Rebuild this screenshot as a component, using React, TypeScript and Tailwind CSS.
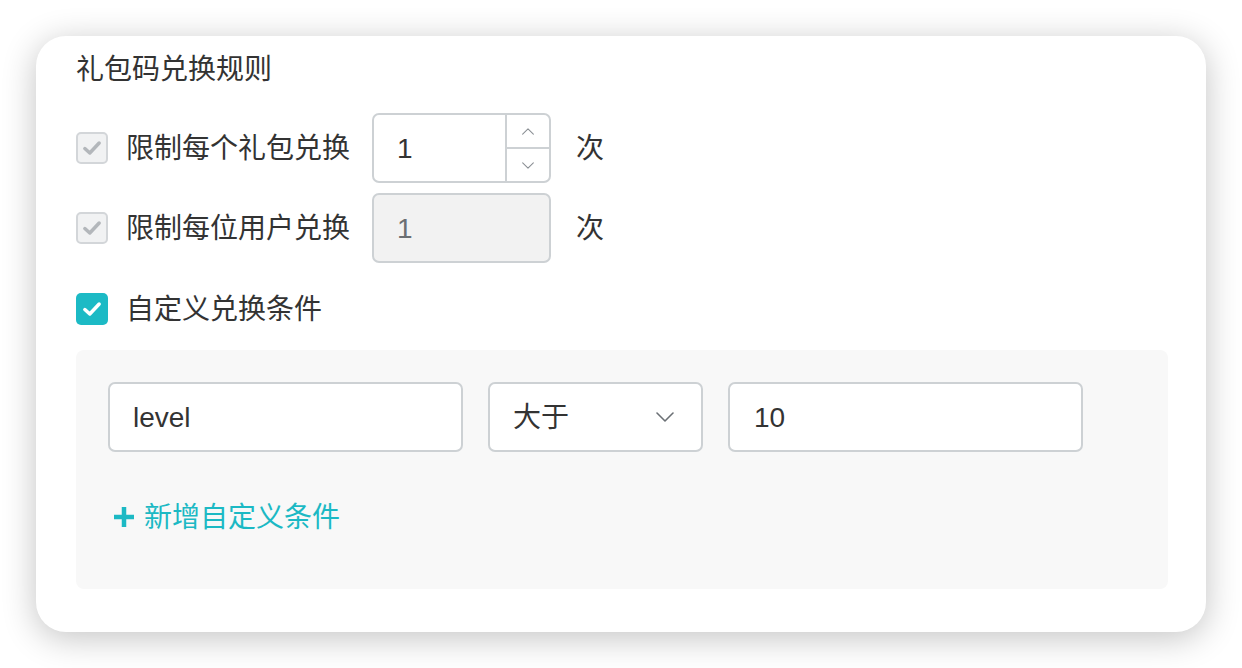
import type { ReactNode } from 'react';

const font = { fontFamily: '"Liberation Sans", "Noto Sans CJK SC", sans-serif' };

function CheckIcon({ className }: { className: string }) {
    return (
        <svg viewBox="0 0 20 20" className={className} fill="none">
            <path d="M3.5 10.5 L8 14.5 L16.5 5.5" stroke="currentColor" strokeWidth="3.2" strokeLinecap="round" strokeLinejoin="round" />
        </svg>
    );
}

function Checkbox({ checked, disabled }: { checked?: boolean; disabled?: boolean }) {
    if (disabled) {
        return (
            <div className="w-[32px] h-[32px] rounded-[5px] border-2 border-[#d3d6d9] bg-[#f1f2f3] flex items-center justify-center shrink-0">
                <CheckIcon className="w-[22px] h-[22px] text-[#b3b7bb]" />
            </div>
        );
    }
    return (
        <div className={`w-[32px] h-[32px] rounded-[5px] flex items-center justify-center shrink-0 ${checked ? 'bg-[#1cbac5]' : 'border-2 border-[#d3d6d9] bg-white'}`}>
            {checked && <CheckIcon className="w-[22px] h-[22px] text-white" />}
        </div>
    );
}

function Chevron({ up, className }: { up?: boolean; className: string }) {
    return (
        <svg viewBox="0 0 18 10" className={className} fill="none">
            <path d={up ? 'M1 9 L9 1 L17 9' : 'M1 1 L9 9 L17 1'} stroke="currentColor" strokeWidth="1.6" strokeLinecap="round" strokeLinejoin="round" />
        </svg>
    );
}

function LimitRow({ label, children }: { label: string; children: ReactNode }) {
    return (
        <div className="flex items-center h-[70px]">
            <Checkbox disabled />
            <span className="ml-[18px] w-[246px] shrink-0 text-[28px] leading-[40px] pt-[2px] text-[#333]">{label}</span>
            {children}
            <span className="ml-[25px] text-[28px] leading-[40px] pt-[2px] text-[#333]">次</span>
        </div>
    );
}

export default function App() {
    return (
        <div className="min-h-screen bg-white flex items-start justify-start pt-[36px] pl-[36px]" style={font}>
            <div className="w-[1170px] h-[596px] bg-white rounded-[30px] shadow-[0_6px_34px_rgba(0,0,0,0.24)] pl-[40px] pr-[38px] pt-[14px]">
                <h2 className="text-[28px] leading-[40px] text-[#333] font-normal">礼包码兑换规则</h2>

                <div className="mt-[23px] flex flex-col gap-[10px]">
                    <LimitRow label="限制每个礼包兑换">
                        <div className="w-[179px] h-[70px] rounded-[7px] border-2 border-[#cdd1d4] bg-white flex overflow-hidden">
                            <div className="flex-1 flex items-center pl-[23px] pt-[2px] text-[28px] text-[#333]">1</div>
                            <div className="w-[44px] border-l-2 border-[#cdd1d4] flex flex-col">
                                <div className="flex-1 flex items-center justify-center border-b-2 border-[#cdd1d4]">
                                    <Chevron up className="w-[12px] h-[7px] text-[#8a8f94]" />
                                </div>
                                <div className="flex-1 flex items-center justify-center">
                                    <Chevron className="w-[12px] h-[7px] text-[#8a8f94]" />
                                </div>
                            </div>
                        </div>
                    </LimitRow>
                    <LimitRow label="限制每位用户兑换">
                        <div className="w-[179px] h-[70px] rounded-[7px] border-2 border-[#cdd1d4] bg-[#f2f2f2] flex items-center pl-[23px] pt-[2px] text-[28px] text-[#6b6f73]">
                            1
                        </div>
                    </LimitRow>
                </div>

                <div className="mt-[26px] h-[40px] flex items-center">
                    <Checkbox checked />
                    <span className="ml-[18px] text-[28px] leading-[40px] pt-[2px] text-[#333]">自定义兑换条件</span>
                </div>

                <div className="mt-[21px] h-[239px] rounded-[8px] bg-[#f8f8f8] pl-[32px] pt-[32px]">
                    <div className="flex gap-[25px]">
                        <div className="w-[355px] h-[70px] rounded-[7px] border-2 border-[#cdd1d4] bg-white flex items-center pl-[23px] pt-[2px] text-[28px] text-[#333]">
                            level
                        </div>
                        <div className="w-[215px] h-[70px] rounded-[7px] border-2 border-[#cdd1d4] bg-white flex items-center justify-between pl-[23px] pr-[27px] text-[28px] text-[#333]">
                            <span className="pt-[2px]">大于</span>
                            <Chevron className="w-[18px] h-[10px] text-[#6b7075]" />
                        </div>
                        <div className="w-[355px] h-[70px] rounded-[7px] border-2 border-[#cdd1d4] bg-white flex items-center pl-[24px] pt-[2px] text-[28px] text-[#333]">
                            10
                        </div>
                    </div>

                    <div className="mt-[45px] h-[40px] flex items-center pl-[4px] text-[#1cb9c4]">
                        <svg viewBox="0 0 24 24" className="w-[24px] h-[24px]" fill="none">
                            <path d="M12 2 V22 M2 12 H22" stroke="currentColor" strokeWidth="4.5" />
                        </svg>
                        <span className="ml-[8px] pt-[2px] text-[28px] leading-[40px]">新增自定义条件</span>
                    </div>
                </div>
            </div>
        </div>
    );
}
